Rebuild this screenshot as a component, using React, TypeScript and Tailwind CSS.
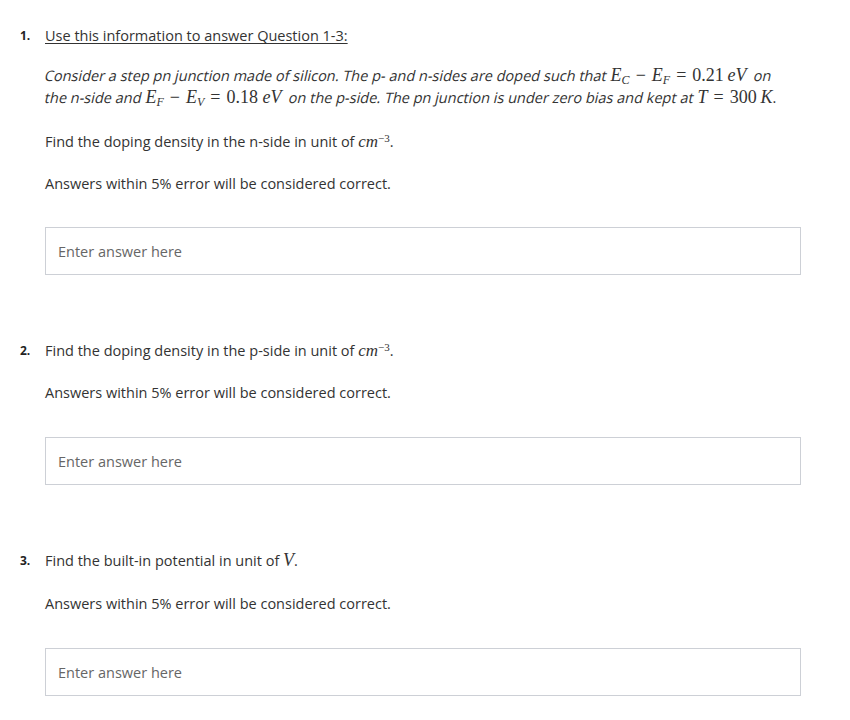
import React from "react";

const sans = "font-['Open_Sans','Liberation_Sans',sans-serif]";
const serif = "font-['Liberation_Serif','DejaVu_Serif',serif]";

// slanted regular face, like the browser's synthetic oblique in the original
function S({ children }: { children: React.ReactNode }) {
    return <span className="inline-block -skew-x-[13deg]">{children}</span>;
}

function Op({ children }: { children: React.ReactNode }) {
    return <span className={`${serif} not-italic text-[18px] leading-[0] px-[6px]`}>{children}</span>;
}

function N({ children }: { children: React.ReactNode }) {
    return <span className={`${serif} not-italic text-[18px] leading-[0]`}>{children}</span>;
}

function V({ c, s }: { c: string; s?: string }) {
    return (
        <span className={`${serif} italic text-[18px] leading-[0]`}>
            {c}
            {s && <sub className="text-[12px] italic leading-[0]">{s}</sub>}
        </span>
    );
}

function Cm() {
    return (
        <span className={`${serif} italic text-[17px] leading-[0]`}>
            cm<sup className="not-italic text-[11px] leading-[0] relative -top-[5px]">−3</sup>
        </span>
    );
}

function Answer() {
    return (
        <input
            className={`${sans} w-[756px] h-[48px] border border-[#cdd0d6] bg-white px-3 text-[14.5px] text-[#333] placeholder:text-[#666] outline-none`}
            placeholder="Enter answer here"
        />
    );
}

function Num({ n }: { n: string }) {
    return <div className="w-[25px] shrink-0 text-[12px] font-bold text-[#222] leading-[22px]">{n}</div>;
}

export default function App() {
    return (
        <div className={`${sans} bg-white w-[850px] min-h-[720px] pl-[20px] pt-[25px] text-[14.5px] leading-[22px] text-[#333]`}>
            <div className="flex">
                <Num n="1." />
                <div className="flex flex-col">
                    <p className="underline underline-offset-2">Use this information to answer Question 1-3:</p>
                    <p className="mt-[18px] whitespace-nowrap">
                        <S>Consider a step pn junction made of silicon. The p- and n-sides are doped such that</S>{" "}
                        <V c="E" s="C" />
                        <Op>−</Op>
                        <V c="E" s="F" />
                        <Op>=</Op>
                        <N>0.21</N>&nbsp;<V c="eV" />&nbsp; <S>on</S>
                        <br />
                        <S>the n-side and</S> <V c="E" s="F" />
                        <Op>−</Op>
                        <V c="E" s="V" />
                        <Op>=</Op>
                        <N>0.18</N>
                        <V c=" eV" />
                        &nbsp; <S>on the p-side. The pn junction is under zero bias and kept at</S> <V c="T" />
                        <Op>=</Op>
                        <N>300</N>&nbsp;<V c="K" />.
                    </p>
                    <p className="mt-[22px]">
                        Find the doping density in the n-side in unit of <Cm />.
                    </p>
                    <p className="mt-[20px]">Answers within 5% error will be considered correct.</p>
                    <div className="mt-[32px]">
                        <Answer />
                    </div>
                </div>
            </div>

            <div className="flex mt-[65px]">
                <Num n="2." />
                <div className="flex flex-col">
                    <p>
                        Find the doping density in the p-side in unit of <Cm />.
                    </p>
                    <p className="mt-[20px]">Answers within 5% error will be considered correct.</p>
                    <div className="mt-[33px]">
                        <Answer />
                    </div>
                </div>
            </div>

            <div className="flex mt-[65px]">
                <Num n="3." />
                <div className="flex flex-col">
                    <p>
                        Find the built-in potential in unit of <V c="V" />.
                    </p>
                    <p className="mt-[21px]">Answers within 5% error will be considered correct.</p>
                    <div className="mt-[33px]">
                        <Answer />
                    </div>
                </div>
            </div>
        </div>
    );
}
